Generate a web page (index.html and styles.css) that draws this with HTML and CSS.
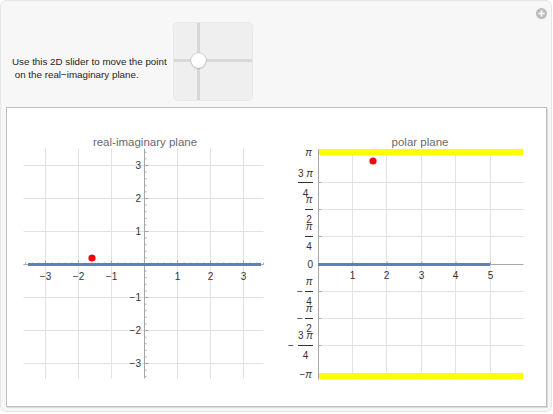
FILE: index.html
```html
<!DOCTYPE html>
<html>
<head>
  <meta charset="UTF-8">
  <link rel="stylesheet" href="styles.css">
</head>
<body>
  <div class="frame">
    <svg class="plus" width="11" height="11" viewBox="0 0 11 11">
      <circle cx="5.5" cy="5.5" r="5.5" fill="#bcbcbc"/>
      <path d="M5.5 2.5v6M2.5 5.5h6" stroke="#fff" stroke-width="1.6"/>
    </svg>

    <div class="controls">
      <div class="caption">Use this 2D slider to move the point<br>&nbsp;on the real&minus;imaginary plane.</div>
      <div class="pad">
        <div class="pad-v"></div>
        <div class="pad-h"></div>
        <div class="knob"></div>
      </div>
    </div>

    <div class="output">
      <!-- real-imaginary plane -->
      <svg class="plot" width="268" height="298">
        <text class="title" x="138" y="38">real-imaginary plane</text>
        <g transform="translate(0.5,0.5)">
          <path class="grid" d="M38 40V270M71 40V270M104 40V270M170 40V270M203 40V270M236 40V270
                                M16 57H256M16 90H256M16 123H256M16 189H256M16 222H256M16 255H256"/>
          <path class="axis" d="M16 156H256M137 40V270"/>
          <path class="tick" id="ticksL"/>
        </g>
        <line class="curve" x1="21" y1="156.5" x2="254" y2="156.5"/>
        <circle class="pt" cx="85" cy="150" r="3.6"/>
        <g class="lbl mid">
          <text x="38.5" y="172">&minus;3</text>
          <text x="71.5" y="172">&minus;2</text>
          <text x="104.5" y="172">&minus;1</text>
          <text x="170.5" y="172">1</text>
          <text x="203.5" y="172">2</text>
          <text x="236.5" y="172">3</text>
        </g>
        <g class="lbl end">
          <text x="134" y="61">3</text>
          <text x="134" y="94">2</text>
          <text x="134" y="127">1</text>
          <text x="134" y="193">&minus;1</text>
          <text x="134" y="226">&minus;2</text>
          <text x="134" y="259">&minus;3</text>
        </g>
      </svg>

      <!-- polar plane -->
      <svg class="plot" width="271" height="298">
        <text class="title" x="145" y="38">polar plane</text>
        <g transform="translate(0.5,0.5)">
          <path class="grid" d="M77 41V271M111 41V271M146 41V271M180 41V271M215 41V271
                                M43 74H248M43 101H248M43 128H248M43 183H248M43 210H248M43 237H248"/>
        </g>
        <rect class="band" x="43" y="41" width="205" height="6"/>
        <rect class="band" x="43" y="265" width="205" height="6"/>
        <g transform="translate(0.5,0.5)">
          <path class="axis" d="M43 156H248M43 41V271"/>
          <path class="tick" id="ticksR"/>
        </g>
        <line class="curve" x1="43" y1="156.5" x2="215" y2="156.5"/>
        <circle class="pt" cx="98" cy="53" r="3.6"/>
        <g class="lbl mid">
          <text x="77.5" y="171">1</text>
          <text x="111.5" y="171">2</text>
          <text x="146.5" y="171">3</text>
          <text x="180.5" y="171">4</text>
          <text x="215.5" y="171">5</text>
        </g>
        <g class="lbl end">
          <text x="37" y="48" class="pi">&pi;</text>
          <text x="38" y="160">0</text>
          <text x="37" y="270">&minus;<tspan class="pi">&pi;</tspan></text>
        </g>
        <g class="lbl mid">
          <text x="30.5" y="69">3 <tspan class="pi">&pi;</tspan></text>
          <text x="30.5" y="89">4</text>
          <text x="34" y="95" class="pi">&pi;</text>
          <text x="34" y="115">2</text>
          <text x="34" y="122" class="pi">&pi;</text>
          <text x="34" y="142">4</text>

          <text x="25" y="187">&minus;</text>
          <text x="34" y="177" class="pi">&pi;</text>
          <text x="34" y="197">4</text>
          <text x="25" y="214">&minus;</text>
          <text x="34" y="204" class="pi">&pi;</text>
          <text x="34" y="224">2</text>
          <text x="16" y="241">&minus;</text>
          <text x="30.5" y="231">3 <tspan class="pi">&pi;</tspan></text>
          <text x="30.5" y="251">4</text>
        </g>
        <path class="bar" d="M23 74.5H38M30 101.5H38M30 128.5H38M30 183.5H38M30 210.5H38M23 237.5H38"/>
      </svg>
    </div>
  </div>

  <script>
    var d = "";
    for (var k = -18; k <= 18; k++) {
      d += "M" + (137 + 6.6 * k).toFixed(1) + " 156v" + (k % 5 == 0 ? -4 : -2);
    }
    for (var k = -17; k <= 17; k++) {
      if (k == 0) continue;
      d += "M137 " + (156 - 6.6 * k).toFixed(1) + "h" + (k % 5 == 0 ? 4 : 2);
    }
    document.getElementById("ticksL").setAttribute("d", d);

    d = "";
    for (var k = 1; k <= 5; k++) d += "M" + (43 + 34.4 * k).toFixed(1) + " 156v-3";
    [74, 101, 128, 183, 210, 237].forEach(function (y) { d += "M43 " + y + "h3"; });
    document.getElementById("ticksR").setAttribute("d", d);
  </script>
</body>
</html>
```

FILE: styles.css
```css
body { margin: 0; background: #fff; font-family: "Liberation Sans", Arial, sans-serif; }

.frame {
  position: relative;
  width: 552px; height: 412px;
  box-sizing: border-box;
  border: 1px solid #e6e6e6;
  border-radius: 6px;
  background: #f7f7f7;
}

.plus { position: absolute; left: 535px; top: 7px; }

.controls { display: flex; align-items: flex-start; padding: 21px 0 0 11px; height: 79px; }

.caption {
  width: 161px; margin-top: 33px;
  font-size: 9.8px; line-height: 13px; color: #1e1e1e;
  white-space: nowrap;
}

.pad {
  position: relative;
  width: 80px; height: 79px;
  box-sizing: border-box;
  border: 1px solid #e8e8e8;
  border-radius: 5px;
  background: #efefef;
}
.pad-v { position: absolute; left: 23px; top: 0; bottom: 0; width: 3px; background: #d8d8d8; }
.pad-h { position: absolute; top: 36px; left: 0; right: 0; height: 3px; background: #d8d8d8; }
.knob {
  position: absolute; left: 17px; top: 30px;
  width: 15px; height: 15px; border-radius: 50%;
  background: #fff;
  box-shadow: 0 0 1px rgba(0,0,0,.45), 0 1px 2px rgba(0,0,0,.15);
}

.output {
  display: flex;
  margin: 6px 0 0 5px;
  width: 541px; height: 300px;
  box-sizing: border-box;
  border: 1px solid #bfbfbf;
  box-shadow: 1px 1px 0 #dcdcdc;
  background: #fff;
}

.plot { display: block; }
.grid { stroke: #e2e2e2; fill: none; }
.axis, .tick { stroke: #a8a8a8; fill: none; }
.curve { stroke: #5e81b5; stroke-width: 3; }
.pt { fill: #ff0000; }
.band { fill: #ffff00; }
.bar { stroke: #333; stroke-width: 1; }
.title { font-size: 11.5px; fill: #6a6a6a; text-anchor: middle; }
.lbl { font-size: 10px; fill: #333; }
.pi { font-style: italic; }
.mid { text-anchor: middle; }
.end { text-anchor: end; }
```
